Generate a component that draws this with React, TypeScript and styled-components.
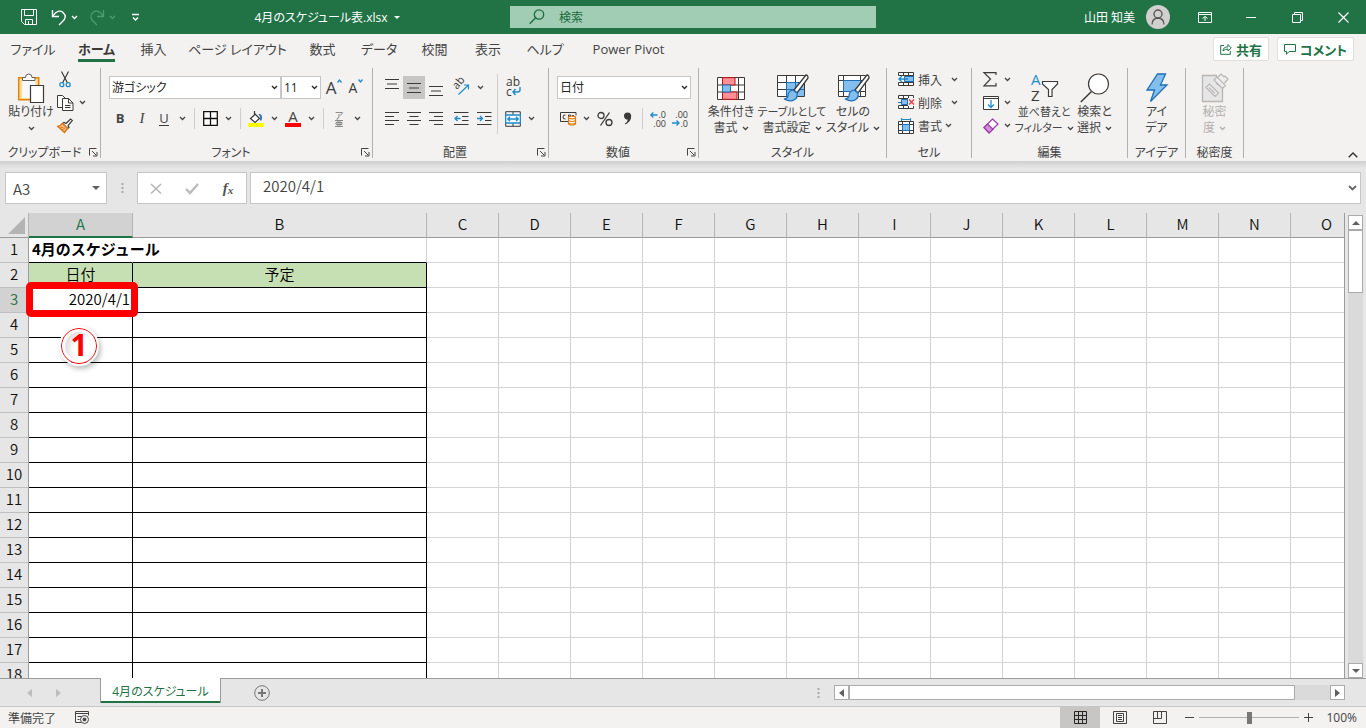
import React from "react";
import styled, { createGlobalStyle, css } from "styled-components";

const INK = "#3b3a38";
const GREEN = "#217346";
const BLUE = "#1e8bcd";
const UI_FONT = '"Open Sans", "Noto Sans CJK JP", sans-serif';
const CELL_FONT = '"Noto Sans CJK JP", sans-serif';

const GlobalStyle = createGlobalStyle`
  * { box-sizing: border-box; }
  body {
    margin: 0;
    font-family: ${UI_FONT};
    font-size: 12px;
    color: #444;
    font-feature-settings: "palt";
  }
  button, input, select { font: inherit; color: inherit; font-feature-settings: inherit; }
  button { background: none; border: 0; padding: 0; }
  svg { display: block; flex: none; overflow: visible; }
`;

/* ---------- drawings ---------- */

const brush = (
  <>
    <path d="M31 1 L19 16 l3 3 L33 4 q0-3-2-3z" fill="#fff" stroke={INK} strokeWidth="1.3" />
    <path d="M18 16 q-5 1-5 6 -1 3-4 3 6 3 10 1 4-2 3-7z" fill="#83beec" stroke="#1e6fb8" strokeWidth="1.2" />
  </>
);

const drawings: Record<string, [number, number, React.ReactNode]> = {
  save: [16, 16, <path key="a" d="M.5.5h15v15H3.500L.5 12.500zM3.500.5v6h9v-6M4.500 15.500v-5h7v5M7.500 12v3" fill="none" stroke="#fff" />],
  undo: [16, 17, <path key="a" d="M1.500 1v6.500H8M2 7C5 2 9 1 12 3.500c3.500 3 2.500 6.500-.5 9L8 16" fill="none" stroke="#fff" strokeWidth="1.4" />],
  redo: [16, 17, <path key="a" d="M14.500 1v6.500H8M14 7C11 2 7 1 4 3.500c-3.500 3-2.500 6.500.5 9L8 16" fill="none" stroke="#4f9a70" strokeWidth="1.3" />],
  customize: [9, 8, <path key="a" d="M1 1.500h7M2 4.500l2.500 2.500L7 4.500" fill="none" stroke="#fff" strokeWidth="1.5" />],
  caret: [6, 3, <path key="a" d="M0 0h6L3 3z" fill="currentColor" />],
  chevron: [7, 5, <path key="a" d="M1 1l2.500 2.500L6 1" fill="none" stroke="currentColor" strokeWidth="1.3" />],
  grow: [5, 4, <path key="a" d="M.5 3.500l2-2.500 2 2.500" fill="none" stroke={BLUE} strokeWidth="1.3" />],
  shrink: [5, 4, <path key="a" d="M.5.5l2 2.500 2-2.500" fill="none" stroke={BLUE} strokeWidth="1.3" />],
  search: [16, 16, <g key="a" fill="none" stroke="#1d6a3f" strokeWidth="1.3"><circle cx="10" cy="5.500" r="4.700" /><path d="M6.500 9L.7 14.800" /></g>],
  avatar: [24, 24, <g key="a"><circle cx="12" cy="12" r="12" fill="#d2d0ce" /><circle cx="12" cy="9" r="4" fill="none" stroke="#555" strokeWidth="1.3" /><path d="M6 19.500q0-6 6-6.500 6 .5 6 6.500" fill="none" stroke="#555" strokeWidth="1.3" /></g>],
  ribbonOptions: [14, 11, <path key="a" d="M.5.5h13v10H.5zM.5 2.500h13M7 9V4.500M4.500 6.500L7 4.500l2.500 2" fill="none" stroke="#fff" />],
  minimize: [10, 10, <path key="a" d="M0 5.500h10" stroke="#fff" />],
  restore: [11, 11, <path key="a" d="M.5 2.500h8v8h-8zM2.500 2.500v-2h8v8h-2" fill="none" stroke="#fff" />],
  close: [11, 11, <path key="a" d="M.5.5l10 10M10.500.5l-10 10" stroke="#fff" strokeWidth="1.2" />],
  share: [12, 12, <path key="a" d="M4 2.500H.7v8.800h9.600V8M3 8q0-4 5-4.200V1.500L11.300 5 8 8V6Q5 6 3 8z" fill="none" stroke={GREEN} />],
  comment: [12, 11, <path key="a" d="M.5.5h11v7H5l-2.500 2.800V7.500h-2z" fill="none" stroke={GREEN} />],
  paste: [28, 31, <g key="a">
    <path d="M1.700 4.700h20v22h-20z" fill="#fbdc8e" stroke="#e8820c" strokeWidth="1.5" />
    <path d="M5 6h13.500v19H5z" fill="#f8f8f8" />
    <path d="M5.500 7.500V4.500h3q0-3.500 3.200-3.500 3.300 0 3.300 3.500h3v3z" fill="#fff" stroke="#605e5c" />
    <path d="M13.500 12.500h13v17h-13z" fill="#fff" stroke={INK} strokeWidth="1.2" />
  </g>],
  cut: [12, 17, <g key="a" fill="none"><path d="M2.500.5L8.500 12M9.500.5L3.500 12" stroke={INK} strokeWidth="1.2" /><circle cx="2.800" cy="13.700" r="2" stroke={BLUE} strokeWidth="1.3" /><circle cx="9.200" cy="13.700" r="2" stroke={BLUE} strokeWidth="1.3" /></g>],
  copy: [17, 16, <g key="a" fill="#fafafa" stroke={INK}><path d="M8.500 12.500h-8V.5h5l3 3" /><path d="M5.500 3.500h6l4.500 4.500v7.500H5.500z" /><path d="M11.500 3.500v4.500H16M8 10.500h5.500M8 12.500h5.500" fill="none" /></g>],
  painter: [16, 15, <g key="a"><path d="M9 5.500L13.500 1 15.300 2.500 11 7.500l1 2-1.500 1-5-5L7 4.500z" fill="#fff" stroke={INK} strokeWidth="1.2" /><path d="M5.500 5.500Q3 8 .8 8.500L7.500 14.500 10.500 10.500z" fill="#f6c58b" stroke="#d9730b" strokeWidth="1.4" /><path d="M3 10l3.500-1M5 12l3-2" stroke="#d9730b" /></g>],
  launcher: [9, 9, <path key="a" d="M.5 7.500v-7h7M3 3l4 4M8 4v4H4" fill="none" stroke="#444" />],
  borders: [15, 15, <path key="a" d="M.7.7h13.600v13.600H.7zM7.500 1v13M1 7.500h13" fill="#fff" stroke="#111" strokeWidth="1.3" />],
  fill: [16, 16, <g key="a"><path d="M6.500 0v4L2.500 7.500 7 11.500 11.500 7.500 6.500 2.500" fill="#fff" stroke={INK} strokeWidth="1.2" /><path d="M10.500 3q3.500-.5 3.500 3.500 0 2-1 3.500-1.500-1-.8-4z" fill="#1e6fb8" /><path d="M0 12h16v4H0z" fill="#ff0" /></g>],
  phonetic: [8, 7, <path key="a" d="M0 .5h8M0 6.500h8M1 2.500h6v2H1zM3 .5v6M5 .5v6" fill="none" stroke="#888" />],
  alignTop: [14, 10, <path key="a" d="M0 .5h14M2 5h10M0 9.500h14" stroke={INK} />],
  left: [14, 13, <path key="a" d="M0 .5h14M0 4.500h9M0 8.500h14M0 12.500h9" stroke={INK} />],
  center: [14, 13, <path key="a" d="M0 .5h14M2.500 4.500h9M0 8.500h14M2.500 12.500h9" stroke={INK} />],
  right: [14, 13, <path key="a" d="M0 .5h14M5 4.500h9M0 8.500h14M5 12.500h9" stroke={INK} />],
  dedent: [15, 13, <g key="a" fill="none"><path d="M0 .5h14.500M8 4.500h6.500M8 8.500h6.500M0 12.500h14.500" stroke={INK} /><path d="M6.500 6.500H1M3.500 4L1 6.500 3.500 9" stroke={BLUE} strokeWidth="1.3" /></g>],
  indent: [15, 13, <g key="a" fill="none"><path d="M0 .5h14.500M8 4.500h6.500M8 8.500h6.500M0 12.500h14.500" stroke={INK} /><path d="M0 6.500h5.500M3 4l2.500 2.500L3 9" stroke={BLUE} strokeWidth="1.3" /></g>],
  orient: [17, 17, <g key="a"><text transform="translate(4 11) rotate(-50)" fontSize="11" fill={INK}>ab</text><path d="M5.500 15.500L15.500 6M11 6h4.500v4.500" fill="none" stroke={BLUE} strokeWidth="1.2" /></g>],
  wrap: [15, 17, <g key="a"><text x="0" y="7" fontSize="12" fill={INK}>ab</text><text x="0" y="17" fontSize="12" fill={INK}>c</text><path d="M14 8v3q0 2-2.500 2H7M9.500 10L7 13l2.500 3" fill="none" stroke={BLUE} strokeWidth="1.4" /></g>],
  merge: [16, 16, <g key="a" fill="none"><path d="M.7.7h14.600v14.600H.7zM8 1v3M8 12v3" stroke={INK} /><path d="M.7 4h14.600v8H.7z" fill="#fff" stroke={BLUE} strokeWidth="1.3" /><path d="M3 8h10M5 5.800L2.800 8 5 10.200M11 5.800L13.200 8 11 10.200" stroke={BLUE} strokeWidth="1.3" /></g>],
  currency: [17, 15, <g key="a" fill="none"><path d="M16 4.500v-3H.5v9H8M5.500 4q-2.500-.5-2.500 2t2.500 2M8.500 4v4M8.500 4h2v2.500M12 4.500h2" stroke={INK} /><path d="M8.500 6.500v6q0 1.500 3.500 1.500t3.500-1.500v-6" fill="#fff" stroke="#e07a10" strokeWidth="1.2" /><ellipse cx="12" cy="6.500" rx="3.500" ry="1.300" fill="#fff" stroke="#e07a10" strokeWidth="1.2" /><path d="M8.500 9.500q3.500 2 7 0M8.500 12q3.500 2 7 0" stroke="#e07a10" strokeWidth="1.2" /></g>],
  percent: [16, 16, <g key="a" fill="none" stroke={INK} strokeWidth="1.3"><circle cx="4" cy="4.500" r="3" /><circle cx="12" cy="11.500" r="3" /><path d="M12.500 1.500l-9 13" /></g>],
  comma: [9, 13, <path key="a" d="M4.500.5a3.700 3.700 0 0 1 3.700 3.800q0 5-5.700 8.200l-.6-1q3-2 2.900-4A3.400 3.400 0 0 1 1 4.200 3.600 3.600 0 0 1 4.500.5z" fill={INK} />],
  moreDecimal: [16, 16, <g key="a" textAnchor="end"><text x="16" y="7" fontSize="9" fill={INK}>.0</text><text x="16" y="16" fontSize="9" fill={INK}>.00</text><path d="M7.500 4H.8M3.300 1.500L.8 4l2.500 2.500" fill="none" stroke={BLUE} strokeWidth="1.3" /></g>],
  lessDecimal: [16, 16, <g key="a" textAnchor="end"><text x="16" y="7" fontSize="9" fill={INK}>.00</text><text x="16" y="16" fontSize="9" fill={INK}>.0</text><path d="M0 12h7M4.500 9.500L7 12l-2.500 2.500" fill="none" stroke={BLUE} strokeWidth="1.3" /></g>],
  conditional: [28, 23, <g key="a" fill="none"><path d="M.5.5h27v22H.5zM1 8h26M1 15h26M21.500 1v21M5.500 1v21" fill="#fff" stroke={INK} /><path d="M5.500.7H18V8H5.500zM5.500 15H20v7.300H5.500z" fill="#ff9095" stroke="#c00f1d" /><path d="M5.500 8h8v7h-8z" fill="#83beec" stroke="#1e6fb8" /></g>],
  tableFormat: [34, 28, <g key="a" fill="none"><path d="M2.500 1.500h27v21h-27zM3 8.500h26M3 15.500h26M11.500 1.500v21M20.500 1.500v21" fill="#fff" stroke={INK} /><path d="M12 8h17v14H12z" fill="#83beec" /><path d="M11.500 22.500v-14h18M12 15.500h17M20.500 8v14" stroke="#1e6fb8" />{brush}</g>],
  cellStyle: [34, 28, <g key="a" fill="none"><path d="M2.500 1.500h27v21h-27zM3 6.500h26M3 17.500h26M7.500 1.500v21M24.500 1.500v21" fill="#fff" stroke={INK} /><path d="M7.500 6.500h17v11h-17z" fill="#83beec" stroke="#1e6fb8" />{brush}</g>],
  insertCells: [17, 15, <g key="a" fill="none"><path d="M.5.5h15v13H.5z" fill="#fff" /><path d="M.5 3.500v-3h15v13H.5v-3M5.500.5v3M10.500.5v3M5.500 10.500v3M10.500 10.500v3M.5 10.500h15M.5 3.500h15" stroke={INK} /><path d="M6.500 4.500h9v5h-9z" fill="#83beec" stroke="#1e6fb8" /><path d="M10 7H1M4 4L1 7l3 3" stroke={BLUE} strokeWidth="1.4" /></g>],
  deleteCells: [17, 15, <g key="a" fill="none"><path d="M.5.500h15v3H.5zM.5 10.500h15v3H.5zM5.500.5v3M10.500.5v3M5.500 10.500v3M10.500 10.500v3" fill="#fff" stroke={INK} /><path d="M3.500 4.500h6v5h-6z" fill="#83beec" stroke="#1e6fb8" /><path d="M0 7.500h4" stroke="#1e6fb8" /><path d="M10 3h7v8h-7z" fill="#f3f2f1" /><path d="M11 4.500l5 5M16 4.500l-5 5" stroke="#e8424c" strokeWidth="1.5" /></g>],
  formatCells: [17, 16, <g key="a" fill="none"><path d="M.5 3.500h15v12H.5zM4.500 3.500v12M11.500 3.500v12M.5 6.500h15M.5 12.500h15" fill="#fff" stroke={INK} /><path d="M4.500 6.500h7v6h-7z" fill="#83beec" stroke="#1e6fb8" /><path d="M3.500 0v3M12.500 0v3M3.500 1.500h9" stroke={BLUE} /></g>],
  sum: [14, 15, <path key="a" d="M13 3V.7H1L7.500 7 1 13.800h12V11" fill="none" stroke={INK} strokeWidth="1.2" />],
  fillDown: [16, 14, <g key="a" fill="none"><path d="M.5.5h15v13H.5zM.5 2.500h15" fill="#fff" stroke={INK} /><path d="M8 4v7.500M5 8.500l3 3 3-3" stroke={BLUE} strokeWidth="1.3" /></g>],
  eraser: [16, 16, <g key="a" stroke="#9b3aa5" strokeWidth="1.2"><path d="M9.500 1l5.500 5L6 15 1 9.500z" fill="#fff" /><path d="M4.500 6L10 11.300 6 15 1 9.500z" fill="#d28ed8" /></g>],
  sortFilter: [30, 30, <g key="a"><text x="2" y="12" fontSize="15" fill={BLUE}>A</text><text x="2" y="28" fontSize="15" fill={INK}>Z</text><path d="M13.500 8.500h15v2.500l-5.500 5.500v7h-3.500v-7L13.500 11z" fill="#fff" stroke={INK} strokeWidth="1.2" /></g>],
  find: [30, 30, <g key="a"><circle cx="18.500" cy="11" r="10" fill="#fff" stroke={INK} strokeWidth="1.2" /><path d="M11.500 18.500L.8 29" stroke={INK} strokeWidth="1.5" /></g>],
  bolt: [22, 30, <path key="a" d="M11.500 1h8l-5 11h6.500L4.500 28.500 8.500 17H1z" fill="#83beec" stroke="#1e6fb8" strokeWidth="1.3" />],
  sensitivity: [28, 31, <g key="a" fill="#e6e6e6" stroke="#b8b6b4"><path d="M1.500 2.500h14v8l6 4v14h-20z" strokeWidth="1.3" /><path d="M5 14.500l3.500-3.500 9 9-3.500 3.500zM8 14.500l6 6M13 7l3-3 8.500 8.500-3 3zM17 4l3-3 3 3 1-1 3 3-3.500 4" fill="#eee" strokeWidth="1.2" /></g>],
  collapse: [10, 6, <path key="a" d="M.7 5.300L5 1l4.300 4.300" fill="none" stroke="#333" strokeWidth="1.4" />],
  expand: [9, 6, <path key="a" d="M1 1l3.500 3.500L8 1" fill="none" stroke="#666" strokeWidth="1.8" />],
  cross: [12, 11, <path key="a" d="M1 1l10 9.500M11 1L1 10.500" stroke="#b8b8b8" strokeWidth="1.7" />],
  check: [14, 11, <path key="a" d="M1 6l4 4L13 1" fill="none" stroke="#bbb" strokeWidth="2.4" />],
  dots: [3, 10, <path key="a" d="M.5 0h2v2h-2zM.5 4h2v2h-2zM.5 8h2v2h-2z" fill="#aaa" />],
  corner: [17, 17, <path key="a" d="M17 0v17H0z" fill="#b4b4b4" />],
  prev: [5, 8, <path key="a" d="M5 0v8L0 4z" fill="currentColor" />],
  next: [5, 8, <path key="a" d="M0 0v8l5-4z" fill="currentColor" />],
  up: [8, 4, <path key="a" d="M0 4h8L4 0z" fill="#606060" />],
  down: [8, 4, <path key="a" d="M0 0h8L4 4z" fill="#606060" />],
  addSheet: [16, 16, <g key="a" fill="none" stroke="#777"><circle cx="8" cy="8" r="7.300" /><path d="M8 4v8M4 8h8" strokeWidth="2" /></g>],
  macro: [15, 13, <g key="a" fill="none" stroke="#444"><path d="M6 11.500H.5V.5h13v4M.5 2.500h13M2.500 5.500h4M2.500 8.500h2" /><circle cx="9.500" cy="8.500" r="4" /><circle cx="9.500" cy="8.500" r="1.500" fill="#444" /></g>],
  viewNormal: [13, 13, <path key="a" d="M.5.5h12v12H.5zM4.500 1v11M8.500 1v11M1 4.500h11M1 8.500h11" fill="none" stroke="#262626" />],
  viewPage: [14, 13, <path key="a" d="M.5.5h13v12h-13zM3.500 2.500h7v8h-7zM5 4.500h4M5 6.500h4M5 8.500h4" fill="none" stroke="#444" />],
  viewBreak: [14, 13, <path key="a" d="M.5.5h13v12h-13zM.5 7.500h8v-7M4.500.5v7" fill="none" stroke="#444" />],
  minus: [9, 9, <path key="a" d="M0 4.500h9" stroke="#444" />],
  plus: [9, 9, <path key="a" d="M0 4.500h9M4.500 0v9" stroke="#444" />],
};

const Icon = ({ name }: { name: string }) => {
  const [w, h, shape] = drawings[name];
  return (
    <svg width={w} height={h} viewBox={`0 0 ${w} ${h}`} aria-hidden="true">
      {shape}
    </svg>
  );
};

/* ---------- title bar ---------- */

const Window = styled.div`
  display: flex;
  flex-direction: column;
  height: 100vh;
  overflow: hidden;
  background: #f3f2f1;
`;

const TitleBar = styled.header`
  display: grid;
  grid-template-columns: 255fr 183fr 245fr;
  align-items: center;
  height: 34px;
  flex: none;
  background: ${GREEN};
  color: #fff;
`;

const TitleLeft = styled.div`
  display: flex;
  align-items: center;
`;

const QuickAccess = styled.div`
  display: flex;
  align-items: center;
  flex: none;
  width: 144px;
  padding-left: 21px;
`;

const QuickButton = styled.button<{ $gap?: number; $dim?: boolean }>`
  margin-right: ${(p) => p.$gap ?? 4}px;
  ${(p) => p.$dim && css`color: #4f9a70;`}
`;

const FileName = styled.button`
  display: flex;
  flex: 1;
  align-items: center;
  justify-content: center;
  gap: 6px;
`;

const SearchBox = styled.label`
  display: flex;
  align-items: center;
  gap: 14px;
  height: 22px;
  padding-left: 19px;
  background: #a0cdb4;
  color: #1d6a3f;
  input {
    flex: 1;
    min-width: 0;
    border: 0;
    padding: 0;
    background: none;
    outline: 0;
  }
  input::placeholder { color: #1d6a3f; opacity: 1; }
`;

const TitleRight = styled.div`
  display: flex;
  align-items: center;
  justify-content: flex-end;
`;

const Account = styled.button`
  display: flex;
  align-items: center;
  gap: 11px;
  margin-right: 12px;
`;

const WindowButton = styled.button`
  display: flex;
  align-items: center;
  justify-content: center;
  width: 46px;
  height: 34px;
`;

/* ---------- tabs ---------- */

const TabBar = styled.nav`
  display: flex;
  flex: none;
  height: 31px;
  padding-right: 12px;
  font-size: 13px;
`;

const Tab = styled.button<{ $width: number; $active?: boolean }>`
  display: flex;
  justify-content: center;
  width: ${(p) => p.$width}px;
  white-space: nowrap;
  span {
    height: 28px;
    line-height: 30px;
    ${(p) => p.$active && css`
      font-weight: 700;
      color: ${INK};
      border-bottom: 3px solid ${GREEN};
    `}
  }
`;

const ShareButton = styled.button`
  display: flex;
  align-items: center;
  gap: 4px;
  height: 24px;
  margin: 3px 0 0 8px;
  padding: 0 6px;
  border: 1px solid #e1dfdd;
  border-radius: 2px;
  background: #fff;
  color: ${GREEN};
  font-size: 13px;
  font-weight: 700;
`;

/* ---------- ribbon ---------- */

const Ribbon = styled.section`
  display: flex;
  flex: none;
  height: 96px;
  padding-top: 3px;
`;

const GroupBox = styled.section<{ $width: number }>`
  display: flex;
  flex-direction: column;
  flex: none;
  width: ${(p) => p.$width}px;
  height: 90px;
  border-right: 1px solid #b3b0ad;
`;

const GroupBody = styled.div<{ $pad?: number }>`
  display: flex;
  flex: 1;
  padding: 0 ${(p) => p.$pad ?? 0}px;
`;

const GroupFooter = styled.div`
  display: flex;
  align-items: center;
  height: 12px;
  line-height: 12px;
  text-align: center;
  white-space: nowrap;
  span {
    flex: 1;
    padding-top: 2px;
  }
  button { width: 11px; }
`;

const Group = ({ label, width, launcher, pad, children }: {
  label: string; width: number; launcher?: boolean; pad?: number; children: React.ReactNode;
}) => (
  <GroupBox $width={width} aria-label={label}>
    <GroupBody $pad={pad}>{children}</GroupBody>
    <GroupFooter>
      <span>{label}</span>
      {launcher && <button aria-label={`${label}の詳細`}><Icon name="launcher" /></button>}
    </GroupFooter>
  </GroupBox>
);

const BigButtonBox = styled.button<{ $width: number; $dim?: boolean }>`
  display: flex;
  flex-direction: column;
  align-items: center;
  width: ${(p) => p.$width}px;
  padding-top: 4px;
  white-space: nowrap;
  color: ${(p) => (p.$dim ? "#b3b0ad" : "inherit")};
`;

const IconSlot = styled.span`
  display: flex;
  align-items: center;
  height: 32px;
`;

const LabelLine = styled.span<{ $compact?: boolean }>`
  display: flex;
  align-items: center;
  gap: 4px;
  height: 16px;
  font-size: ${(p) => (p.$compact ? 11 : 12)}px;
  line-height: 16px;
`;

/* Labels of five or more characters are set one size down. */
const isLong = (label?: string) => (label ?? "").length > 4;

const BigButton = ({ icon, width, first, second, menu, dim }: {
  icon: string; width: number; first: string; second?: string; menu?: boolean; dim?: boolean;
}) => (
  <BigButtonBox $width={width} $dim={dim} disabled={dim}>
    <IconSlot><Icon name={icon} /></IconSlot>
    <LabelLine $compact={isLong(first)}>{first}</LabelLine>
    <LabelLine $compact={isLong(second)}>
      {second}
      {menu && <Icon name="chevron" />}
    </LabelLine>
  </BigButtonBox>
);

const SmallColumn = styled.div<{ $width: number }>`
  display: grid;
  grid-auto-rows: 23px;
  width: ${(p) => p.$width}px;
`;

const SmallRow = styled.button`
  display: flex;
  align-items: center;
  gap: 3px;
  white-space: nowrap;
`;

const ChevronSlot = styled.span<{ $space: number }>`
  margin-left: ${(p) => p.$space}px;
`;

const ToolRows = styled.div`
  display: flex;
  flex-direction: column;
  gap: 8px;
  padding-top: 8px;
`;

const ToolRow = styled.div`
  display: flex;
  align-items: center;
  height: 23px;
`;

const Tool = styled.button<{ $on?: boolean; $width?: number; $align?: string }>`
  display: flex;
  align-items: ${(p) => p.$align ?? "center"};
  justify-content: center;
  width: ${(p) => p.$width ?? 22}px;
  height: 23px;
  padding: 3px 0;
  background: ${(p) => (p.$on ? "#c8c6c4" : "none")};
`;

const Menu = ({ width = 15, label }: { width?: number; label: string }) => (
  <Tool $width={width} aria-label={label}><Icon name="chevron" /></Tool>
);

const Letter = styled.span<{ $kind: "bold" | "italic" | "underline" }>`
  font-size: 13px;
  line-height: 17px;
  ${(p) => p.$kind === "bold" && css`font-weight: 700;`}
  ${(p) => p.$kind === "italic" && css`font-family: "Liberation Serif", serif; font-style: italic; font-size: 15px;`}
  ${(p) => p.$kind === "underline" && css`border-bottom: 1px solid ${INK}; line-height: 14px;`}
`;

const FontColor = styled.span`
  width: 16px;
  height: 16px;
  border-bottom: 4px solid #f00;
  font-size: 15px;
  line-height: 11px;
  text-align: center;
`;

const SizeLetter = styled.span<{ $large?: boolean }>`
  display: flex;
  gap: 1px;
  margin-left: 4px;
  color: ${INK};
  font-size: ${(p) => (p.$large ? 17 : 14)}px;
  line-height: 18px;
`;

const Phonetic = styled.span`
  display: flex;
  flex-direction: column;
  align-items: center;
  color: #777;
  font-size: 9px;
  line-height: 9px;
`;

const Rule = styled.span<{ $tall?: boolean }>`
  width: 1px;
  height: ${(p) => (p.$tall ? 60 : 21)}px;
  margin: ${(p) => (p.$tall ? "6px 4px 0" : "0 4px")};
  background: #d0cecc;
`;

const SelectBox = styled.label<{ $width: number }>`
  display: grid;
  align-items: center;
  width: ${(p) => p.$width}px;
  height: 23px;
  border: 1px solid #c8c6c4;
  background: #fff;
  color: #262626;
  select, > svg { grid-area: 1 / 1; }
  select {
    width: 100%;
    height: 21px;
    border: 0;
    padding: 0 2px;
    appearance: none;
    background: none;
    outline: 0;
  }
  > svg { justify-self: end; margin-right: 2px; pointer-events: none; }
`;

const Select = ({ width, value, label }: { width: number; value: string; label: string }) => (
  <SelectBox $width={width}>
    <select aria-label={label} defaultValue={value}><option>{value}</option></select>
    <Icon name="chevron" />
  </SelectBox>
);

const RibbonEnd = styled.div`
  display: flex;
  flex: 1;
  align-items: flex-end;
  justify-content: flex-end;
  padding: 0 8px 3px 0;
`;

/* ---------- formula bar ---------- */

const FormulaBar = styled.section`
  display: flex;
  flex: none;
  height: 52px;
  padding: 11px 5px 9px;
  background: linear-gradient(#cfcfcf, #e6e6e6 7px);
  font-family: ${CELL_FONT};
  font-size: 15px;
  font-weight: 350;
  font-feature-settings: normal;
`;

const NameBox = styled.div`
  display: flex;
  align-items: center;
  width: 102px;
  height: 32px;
  padding: 0 6px 0 7px;
  border: 1px solid #c6c6c6;
  background: #fff;
  input {
    flex: 1;
    min-width: 0;
    border: 0;
    padding: 2px 0 0;
    outline: 0;
    background: none;
    line-height: 24px;
  }
`;

const Grip = styled.span`
  display: flex;
  align-items: center;
  justify-content: center;
  width: 30px;
`;

const FormulaButtons = styled.div`
  display: grid;
  grid-template-columns: repeat(3, 36px);
  width: 110px;
  border: 1px solid #c6c6c6;
  background: #fff;
  button {
    display: flex;
    align-items: center;
    justify-content: center;
    color: #555;
    font-family: "Liberation Serif", serif;
    font-style: italic;
    font-weight: 700;
    font-size: 15px;
  }
  small { font-size: 11px; padding-top: 4px; }
`;

const FormulaInput = styled.div`
  display: flex;
  flex: 1;
  align-items: center;
  margin-left: 3px;
  padding: 0 3px 0 12px;
  border: 1px solid #c6c6c6;
  background: #fff;
  input {
    flex: 1;
    min-width: 0;
    border: 0;
    padding: 0 0 4px;
    outline: 0;
    background: none;
    line-height: 24px;
  }
`;

/* ---------- sheet ---------- */

const SheetArea = styled.main`
  display: flex;
  flex: 1;
  min-height: 0;
  background: #e6e6e6;
`;

const SheetView = styled.div`
  flex: 1;
  min-width: 0;
  overflow: hidden;
  border-right: 1px solid #9b9b9b;
  background: linear-gradient(#e6e6e6 25px, #fff 25px);
`;

const Grid = styled.table`
  table-layout: fixed;
  width: 1363px;
  border-collapse: separate;
  border-spacing: 0;
  color: #000;
  font-family: ${CELL_FONT};
  font-size: 15px;
  font-weight: 350;
  font-feature-settings: normal;
  line-height: 22px;
  th, td { height: 25px; padding: 0 0 2px; white-space: nowrap; }
`;

const ColumnHead = styled.th<{ $on?: boolean }>`
  border-right: 1px solid #b5b5b5;
  border-bottom: ${(p) => (p.$on ? `2px solid ${GREEN}` : "1px solid #9b9b9b")};
  background: ${(p) => (p.$on ? "#d2d2d2" : "#e6e6e6")};
  color: ${(p) => (p.$on ? GREEN : "#111")};
  font-weight: 350;
  line-height: 20px;
`;

const CornerHead = styled(ColumnHead)`
  svg { margin: 3px 0 0 8px; }
`;

const RowHead = styled.th<{ $on?: boolean }>`
  border-right: 1px solid #9b9b9b;
  border-bottom: 1px solid #c0c0c0;
  background: ${(p) => (p.$on ? "#d2d2d2" : "#e6e6e6")};
  color: ${(p) => (p.$on ? GREEN : "#111")};
  font-weight: 350;
`;

const Cell = styled.td<{ $framed?: boolean; $under?: boolean; $open?: boolean; $head?: boolean; $align?: string }>`
  position: relative;
  border-right: 1px solid ${(p) => (p.$framed ? "#000" : p.$open ? "#fff" : "#d4d4d4")};
  border-bottom: 1px solid ${(p) => (p.$framed || p.$under ? "#000" : "#d4d4d4")};
  background: ${(p) => (p.$head ? "#c6e0b4" : "none")};
  text-align: ${(p) => p.$align ?? "left"};
`;

const SheetTitle = styled.strong`
  position: relative;
  z-index: 1;
  padding-left: 3px;
  font-weight: 700;
`;

const DateValue = styled.span`
  padding-right: 2px;
`;

const Highlight = styled.span`
  position: absolute;
  z-index: 2;
  inset: -6px -6px -5px -3px;
  border: 7px solid #f00;
  border-radius: 5px;
`;

const StepBadge = styled.span`
  position: absolute;
  z-index: 3;
  top: 40px;
  left: 32px;
  width: 36px;
  height: 36px;
  border: 1px solid #f00;
  border-radius: 50%;
  outline: 2px solid #fff;
  background: #fff;
  box-shadow: inset 0 0 0 3px #fff, inset 6px 4px 5px 2px #e4e4e4, 2px 3px 5px 2px rgba(0, 0, 0, 0.25);
  color: #f00;
  font-family: "Open Sans", sans-serif;
  font-size: 30px;
  font-weight: 700;
  line-height: 32px;
  text-align: center;
`;

const VScroll = styled.div`
  display: flex;
  flex-direction: column;
  flex: none;
  width: 15px;
  margin: 2px 3px 0 3px;
  background: #dadada;
`;

const ScrollButton = styled.button`
  display: flex;
  align-items: center;
  justify-content: center;
  flex: none;
  width: 15px;
  height: 15px;
  border: 1px solid #ababab;
  background: #fff;
  color: #606060;
`;

const VThumb = styled.div`
  height: 63px;
  border: 1px solid #ababab;
  background: #fff;
`;

const Filler = styled.div`
  flex: 1;
`;

/* ---------- sheet tabs and status bar ---------- */

const SheetBar = styled.footer`
  display: flex;
  flex: none;
  align-items: center;
  height: 28px;
  padding-right: 21px;
  border-top: 1px solid #9b9b9b;
  background: #e6e6e6;
`;

const SheetNav = styled.div`
  display: flex;
  gap: 24px;
  width: 100px;
  padding-left: 27px;
  color: #bdbdbd;
`;

const SheetTab = styled.button`
  align-self: flex-start;
  width: 121px;
  height: 25px;
  margin-top: -1px;
  border: solid #9b9b9b;
  border-width: 0 1px;
  box-shadow: inset 0 -2px ${GREEN};
  background: #fff;
  color: ${GREEN};
  white-space: nowrap;
`;

const AddSheet = styled.button`
  margin-left: 33px;
`;

const HScroll = styled.div`
  display: flex;
  flex: none;
  width: 38%;
  background: #dadada;
`;

const HThumb = styled.div`
  flex: 1;
  margin-right: 35px;
  border: 1px solid #ababab;
  background: #fff;
`;

const StatusBar = styled.footer`
  display: flex;
  flex: none;
  align-items: center;
  height: 22px;
  padding: 0 9px 0 8px;
  border-top: 1px solid #c6c6c6;
`;

const MacroButton = styled.button`
  margin-left: 19px;
`;

const ViewButton = styled.button<{ $on?: boolean }>`
  display: flex;
  align-items: center;
  justify-content: center;
  width: 40px;
  height: 21px;
  background: ${(p) => (p.$on ? "#c8c6c4" : "none")};
`;

const Zoom = styled.div`
  display: flex;
  align-items: center;
  gap: 5px;
  margin-left: 5px;
  input {
    width: 100px;
    height: 12px;
    margin: 0;
    appearance: none;
    background: linear-gradient(#b0b0b0, #b0b0b0) center / 100% 1px no-repeat;
  }
  input::-webkit-slider-thumb {
    appearance: none;
    width: 5px;
    height: 12px;
    background: #777;
  }
`;

const ZoomValue = styled.button`
  width: 39px;
  margin-left: 5px;
  text-align: right;
`;

const TABS: [string, number][] = [
  ["ファイル", 66], ["ホーム", 61], ["挿入", 53], ["ページ レイアウト", 115], ["数式", 55],
  ["データ", 58], ["校閲", 53], ["表示", 54], ["ヘルプ", 60], ["Power Pivot", 107],
];

const COLUMNS = "ABCDEFGHIJKLMNO".split("");
const ROWS = Array.from({ length: 18 }, (_, i) => i + 1);
const columnWidth = (c: string) => (c === "A" ? 104 : c === "B" ? 294 : 72);

const SheetCell = ({ column, row }: { column: string; row: number }) => {
  const inTable = column === "A" || column === "B";
  if (row === 1) {
    return (
      <Cell $under={inTable} $open={column === "A"}>
        {column === "A" && <SheetTitle>4月のスケジュール</SheetTitle>}
      </Cell>
    );
  }
  if (row === 2 && inTable) {
    return <Cell $framed $head $align="center">{column === "A" ? "日付" : "予定"}</Cell>;
  }
  if (row === 3 && column === "A") {
    return (
      <Cell $framed $align="right">
        <DateValue>2020/4/1</DateValue>
        <Highlight />
        <StepBadge>1</StepBadge>
      </Cell>
    );
  }
  return <Cell $framed={inTable} />;
};

export default function App() {
  return (
    <Window>
      <GlobalStyle />
      <TitleBar>
        <TitleLeft>
          <QuickAccess>
            <QuickButton $gap={14} aria-label="上書き保存"><Icon name="save" /></QuickButton>
            <QuickButton aria-label="元に戻す"><Icon name="undo" /></QuickButton>
            <QuickButton $gap={11} aria-label="元に戻す履歴"><Icon name="chevron" /></QuickButton>
            <QuickButton $dim aria-label="やり直し"><Icon name="redo" /></QuickButton>
            <QuickButton $dim $gap={15} aria-label="やり直し履歴"><Icon name="chevron" /></QuickButton>
            <QuickButton $gap={0} aria-label="カスタマイズ"><Icon name="customize" /></QuickButton>
          </QuickAccess>
          <FileName>4月のスケジュール表.xlsx<Icon name="caret" /></FileName>
        </TitleLeft>
        <SearchBox>
          <Icon name="search" />
          <input type="text" placeholder="検索" aria-label="検索" />
        </SearchBox>
        <TitleRight>
          <Account>山田 知美<Icon name="avatar" /></Account>
          <WindowButton aria-label="リボンの表示オプション"><Icon name="ribbonOptions" /></WindowButton>
          <WindowButton aria-label="最小化"><Icon name="minimize" /></WindowButton>
          <WindowButton aria-label="元に戻す (縮小)"><Icon name="restore" /></WindowButton>
          <WindowButton aria-label="閉じる"><Icon name="close" /></WindowButton>
        </TitleRight>
      </TitleBar>

      <TabBar>
        {TABS.map(([name, width]) => (
          <Tab key={name} $width={width} $active={name === "ホーム"}><span>{name}</span></Tab>
        ))}
        <Filler />
        <ShareButton><Icon name="share" />共有</ShareButton>
        <ShareButton><Icon name="comment" />コメント</ShareButton>
      </TabBar>

      <Ribbon>
        <Group label="クリップボード" width={101} launcher pad={5}>
          <BigButton icon="paste" width={52} first="貼り付け" menu />
          <SmallColumn $width={36}>
            <SmallRow aria-label="切り取り"><ChevronSlot $space={2}><Icon name="cut" /></ChevronSlot></SmallRow>
            <SmallRow aria-label="コピー"><Icon name="copy" /><ChevronSlot $space={2}><Icon name="chevron" /></ChevronSlot></SmallRow>
            <SmallRow aria-label="書式のコピー/貼り付け"><Icon name="painter" /></SmallRow>
          </SmallColumn>
        </Group>

        <Group label="フォント" width={272} launcher pad={8}>
          <ToolRows>
            <ToolRow>
              <Select width={172} value="游ゴシック" label="フォント名" />
              <Select width={40} value="11" label="フォント サイズ" />
              <Tool aria-label="フォント サイズの拡大"><SizeLetter $large>A<Icon name="grow" /></SizeLetter></Tool>
              <Tool aria-label="フォント サイズの縮小"><SizeLetter>A<Icon name="shrink" /></SizeLetter></Tool>
            </ToolRow>
            <ToolRow>
              <Tool aria-label="太字"><Letter $kind="bold">B</Letter></Tool>
              <Tool aria-label="斜体"><Letter $kind="italic">I</Letter></Tool>
              <Tool aria-label="下線"><Letter $kind="underline">U</Letter></Tool>
              <Menu label="下線の種類" />
              <Rule />
              <Tool aria-label="罫線"><Icon name="borders" /></Tool>
              <Menu label="罫線の種類" />
              <Rule />
              <Tool aria-label="塗りつぶしの色"><Icon name="fill" /></Tool>
              <Menu label="塗りつぶしの色の選択" />
              <Tool aria-label="フォントの色"><FontColor>A</FontColor></Tool>
              <Menu label="フォントの色の選択" />
              <Rule />
              <Tool aria-label="ふりがな"><Phonetic>ア<Icon name="phonetic" /></Phonetic></Tool>
              <Menu label="ふりがなの設定" />
            </ToolRow>
          </ToolRows>
        </Group>

        <Group label="配置" width={176} launcher pad={8}>
          <ToolRows>
            <ToolRow>
              <Tool $align="flex-start" aria-label="上揃え"><Icon name="alignTop" /></Tool>
              <Tool $on aria-label="上下中央揃え"><Icon name="alignTop" /></Tool>
              <Tool $align="flex-end" aria-label="下揃え"><Icon name="alignTop" /></Tool>
              <Tool $width={28} aria-label="方向"><Icon name="orient" /></Tool>
              <Menu width={10} label="方向の選択" />
            </ToolRow>
            <ToolRow>
              <Tool aria-label="左揃え"><Icon name="left" /></Tool>
              <Tool aria-label="中央揃え"><Icon name="center" /></Tool>
              <Tool aria-label="右揃え"><Icon name="right" /></Tool>
              <Tool $width={28} aria-label="インデントを減らす"><Icon name="dedent" /></Tool>
              <Tool $width={18} aria-label="インデントを増やす"><Icon name="indent" /></Tool>
            </ToolRow>
          </ToolRows>
          <Rule $tall />
          <ToolRows>
            <ToolRow>
              <Tool aria-label="折り返して全体を表示する"><Icon name="wrap" /></Tool>
            </ToolRow>
            <ToolRow>
              <Tool aria-label="セルを結合して中央揃え"><Icon name="merge" /></Tool>
              <Menu label="結合の種類" />
            </ToolRow>
          </ToolRows>
        </Group>

        <Group label="数値" width={150} launcher pad={8}>
          <ToolRows>
            <ToolRow><Select width={134} value="日付" label="数値の書式" /></ToolRow>
            <ToolRow>
              <Tool aria-label="通貨表示形式"><Icon name="currency" /></Tool>
              <Menu label="通貨の選択" />
              <Tool aria-label="パーセント スタイル"><Icon name="percent" /></Tool>
              <Tool aria-label="桁区切りスタイル"><Icon name="comma" /></Tool>
              <Rule />
              <Tool aria-label="小数点以下の表示桁数を増やす"><Icon name="moreDecimal" /></Tool>
              <Tool aria-label="小数点以下の表示桁数を減らす"><Icon name="lessDecimal" /></Tool>
            </ToolRow>
          </ToolRows>
        </Group>

        <Group label="スタイル" width={188} pad={2}>
          <BigButton icon="conditional" width={60} first="条件付き" second="書式" menu />
          <BigButton icon="tableFormat" width={62} first="テーブルとして" second="書式設定" menu />
          <BigButton icon="cellStyle" width={60} first="セルの" second="スタイル" menu />
        </Group>

        <Group label="セル" width={85} pad={11}>
          <SmallColumn $width={62}>
            <SmallRow><Icon name="insertCells" />挿入<ChevronSlot $space={6}><Icon name="chevron" /></ChevronSlot></SmallRow>
            <SmallRow><Icon name="deleteCells" />削除<ChevronSlot $space={6}><Icon name="chevron" /></ChevronSlot></SmallRow>
            <SmallRow><Icon name="formatCells" />書式<ChevronSlot $space={0}><Icon name="chevron" /></ChevronSlot></SmallRow>
          </SmallColumn>
        </Group>

        <Group label="編集" width={156} pad={11}>
          <SmallColumn $width={36}>
            <SmallRow aria-label="オート SUM"><Icon name="sum" /><ChevronSlot $space={4}><Icon name="chevron" /></ChevronSlot></SmallRow>
            <SmallRow aria-label="フィル"><Icon name="fillDown" /><ChevronSlot $space={2}><Icon name="chevron" /></ChevronSlot></SmallRow>
            <SmallRow aria-label="クリア"><Icon name="eraser" /><ChevronSlot $space={2}><Icon name="chevron" /></ChevronSlot></SmallRow>
          </SmallColumn>
          <BigButton icon="sortFilter" width={58} first="並べ替えと" second="フィルター" menu />
          <BigButton icon="find" width={48} first="検索と" second="選択" menu />
        </Group>

        <Group label="アイデア" width={58}>
          <BigButton icon="bolt" width={57} first="アイ" second="デア" />
        </Group>

        <Group label="秘密度" width={58}>
          <BigButton icon="sensitivity" width={57} first="秘密" second="度" menu dim />
        </Group>

        <RibbonEnd>
          <button aria-label="リボンを折りたたむ"><Icon name="collapse" /></button>
        </RibbonEnd>
      </Ribbon>

      <FormulaBar>
        <NameBox>
          <input type="text" aria-label="名前ボックス" defaultValue="A3" />
          <button aria-label="名前の一覧"><Icon name="down" /></button>
        </NameBox>
        <Grip><Icon name="dots" /></Grip>
        <FormulaButtons>
          <button aria-label="キャンセル"><Icon name="cross" /></button>
          <button aria-label="入力"><Icon name="check" /></button>
          <button aria-label="関数の挿入">f<small>x</small></button>
        </FormulaButtons>
        <FormulaInput>
          <input type="text" aria-label="数式バー" defaultValue="2020/4/1" />
          <button aria-label="数式バーの展開"><Icon name="expand" /></button>
        </FormulaInput>
      </FormulaBar>

      <SheetArea>
        <SheetView>
          <Grid>
            <colgroup>
              <col style={{ width: 29 }} />
              {COLUMNS.map((c) => <col key={c} style={{ width: columnWidth(c) }} />)}
            </colgroup>
            <thead>
              <tr>
                <CornerHead><Icon name="corner" /></CornerHead>
                {COLUMNS.map((c) => <ColumnHead key={c} scope="col" $on={c === "A"}>{c}</ColumnHead>)}
              </tr>
            </thead>
            <tbody>
              {ROWS.map((row) => (
                <tr key={row}>
                  <RowHead scope="row" $on={row === 3}>{row}</RowHead>
                  {COLUMNS.map((c) => <SheetCell key={c} column={c} row={row} />)}
                </tr>
              ))}
            </tbody>
          </Grid>
        </SheetView>
        <VScroll>
          <ScrollButton aria-label="上へスクロール"><Icon name="up" /></ScrollButton>
          <VThumb />
          <Filler />
          <ScrollButton aria-label="下へスクロール"><Icon name="down" /></ScrollButton>
        </VScroll>
      </SheetArea>

      <SheetBar>
        <SheetNav>
          <button aria-label="前のシート"><Icon name="prev" /></button>
          <button aria-label="次のシート"><Icon name="next" /></button>
        </SheetNav>
        <SheetTab>4月のスケジュール</SheetTab>
        <AddSheet aria-label="新しいシート"><Icon name="addSheet" /></AddSheet>
        <Filler />
        <Grip><Icon name="dots" /></Grip>
        <HScroll>
          <ScrollButton aria-label="左へスクロール"><Icon name="prev" /></ScrollButton>
          <HThumb />
          <ScrollButton aria-label="右へスクロール"><Icon name="next" /></ScrollButton>
        </HScroll>
      </SheetBar>

      <StatusBar>
        準備完了
        <MacroButton aria-label="マクロの記録"><Icon name="macro" /></MacroButton>
        <Filler />
        <ViewButton $on aria-label="標準"><Icon name="viewNormal" /></ViewButton>
        <ViewButton aria-label="ページ レイアウト"><Icon name="viewPage" /></ViewButton>
        <ViewButton aria-label="改ページ プレビュー"><Icon name="viewBreak" /></ViewButton>
        <Zoom>
          <button aria-label="縮小"><Icon name="minus" /></button>
          <input type="range" min={10} max={190} defaultValue={100} aria-label="ズーム" />
          <button aria-label="拡大"><Icon name="plus" /></button>
        </Zoom>
        <ZoomValue>100%</ZoomValue>
      </StatusBar>
    </Window>
  );
}
